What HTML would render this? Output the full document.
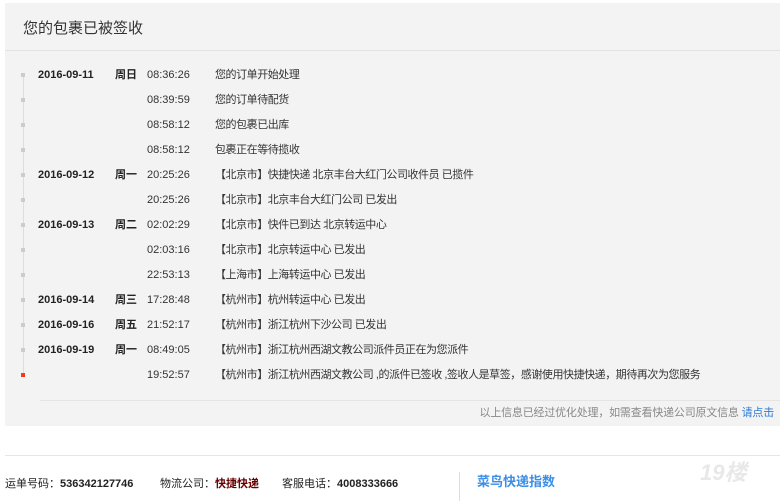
<!DOCTYPE html>
<html><head><meta charset="utf-8"><style>
body{margin:0;width:780px;height:501px;background:#fff;font-family:"Liberation Sans","Noto Sans CJK SC",sans-serif;position:relative;overflow:hidden;color:#333}
.panel{position:absolute;left:5px;top:3px;width:800px;height:423px;background:#f3f3f3}
.hd{position:absolute;left:0;top:0;width:800px;height:47px;border-bottom:1px solid #e2e2e2}
.hd span{position:absolute;left:18px;top:14px;font-size:15px;color:#333}
.line{position:absolute;left:23px;top:76px;width:1px;height:297px;background:#ddd}
.row{position:absolute;left:0;height:20px;font-size:11px;line-height:20px;width:780px}
.row .dot{position:absolute;left:21px;top:8px;width:4px;height:4px;background:#ccc}
.row .d{position:absolute;left:38px;font-weight:bold;color:#222}
.row .w{position:absolute;left:115px;font-weight:bold;color:#222}
.row .t{position:absolute;left:147px;color:#333}
.row .x{position:absolute;left:215px;color:#333;letter-spacing:-0.45px}
.sep{position:absolute;left:40px;top:400px;width:740px;height:1px;background:#e4e4e4}
.note{position:absolute;right:6px;top:405px;font-size:11px;color:#888;line-height:16px;letter-spacing:-0.2px}
.note b{font-weight:normal;color:#2e7bd8}
.hr{position:absolute;left:5px;top:455px;width:775px;height:1px;background:#e6e6e6}
.foot{position:absolute;top:476px;font-size:11px;line-height:16px;color:#222}
</style></head><body>
<div class="panel"><div class="hd"><span>您的包裹已被签收</span></div></div>
<div class="line"></div>
<div class="row" style="top:65px"><i class="dot"></i><span class="d">2016-09-11</span><span class="w">周日</span><span class="t">08:36:26</span><span class="x">您的订单开始处理</span></div>
<div class="row" style="top:90px"><i class="dot"></i><span class="t">08:39:59</span><span class="x">您的订单待配货</span></div>
<div class="row" style="top:115px"><i class="dot"></i><span class="t">08:58:12</span><span class="x">您的包裹已出库</span></div>
<div class="row" style="top:140px"><i class="dot"></i><span class="t">08:58:12</span><span class="x">包裹正在等待揽收</span></div>
<div class="row" style="top:165px"><i class="dot"></i><span class="d">2016-09-12</span><span class="w">周一</span><span class="t">20:25:26</span><span class="x">【北京市】快捷快递 北京丰台大红门公司收件员 已揽件</span></div>
<div class="row" style="top:190px"><i class="dot"></i><span class="t">20:25:26</span><span class="x">【北京市】北京丰台大红门公司 已发出</span></div>
<div class="row" style="top:215px"><i class="dot"></i><span class="d">2016-09-13</span><span class="w">周二</span><span class="t">02:02:29</span><span class="x">【北京市】快件已到达 北京转运中心</span></div>
<div class="row" style="top:240px"><i class="dot"></i><span class="t">02:03:16</span><span class="x">【北京市】北京转运中心 已发出</span></div>
<div class="row" style="top:265px"><i class="dot"></i><span class="t">22:53:13</span><span class="x">【上海市】上海转运中心 已发出</span></div>
<div class="row" style="top:290px"><i class="dot"></i><span class="d">2016-09-14</span><span class="w">周三</span><span class="t">17:28:48</span><span class="x">【杭州市】杭州转运中心 已发出</span></div>
<div class="row" style="top:315px"><i class="dot"></i><span class="d">2016-09-16</span><span class="w">周五</span><span class="t">21:52:17</span><span class="x">【杭州市】浙江杭州下沙公司 已发出</span></div>
<div class="row" style="top:340px"><i class="dot"></i><span class="d">2016-09-19</span><span class="w">周一</span><span class="t">08:49:05</span><span class="x">【杭州市】浙江杭州西湖文教公司派件员正在为您派件</span></div>
<div class="row" style="top:365px"><i class="dot" style="background:#f03c1e"></i><span class="t">19:52:57</span><span class="x">【杭州市】浙江杭州西湖文教公司 ,的派件已签收 ,签收人是草签，感谢使用快捷快递，期待再次为您服务</span></div>
<div class="sep"></div>
<div class="note">以上信息已经过优化处理，如需查看快递公司原文信息 <b>请点击</b></div>
<div class="hr"></div>
<div class="foot" style="left:5px">运单号码：<b>536342127746</b></div>
<div class="foot" style="left:160px">物流公司：<b style="color:#600">快捷快递</b></div>
<div class="foot" style="left:282px">客服电话：<b>4008333666</b></div>
<div style="position:absolute;left:459px;top:472px;width:1px;height:29px;background:#ddd"></div>
<div class="foot" style="left:477px;font-size:13px;font-weight:bold;color:#3a8ee6;top:474px">菜鸟快递指数</div>
<div style="position:absolute;left:700px;top:455px;font-size:22px;font-weight:bold;color:#e8e8e8;font-style:italic">19楼</div>
</body></html>
